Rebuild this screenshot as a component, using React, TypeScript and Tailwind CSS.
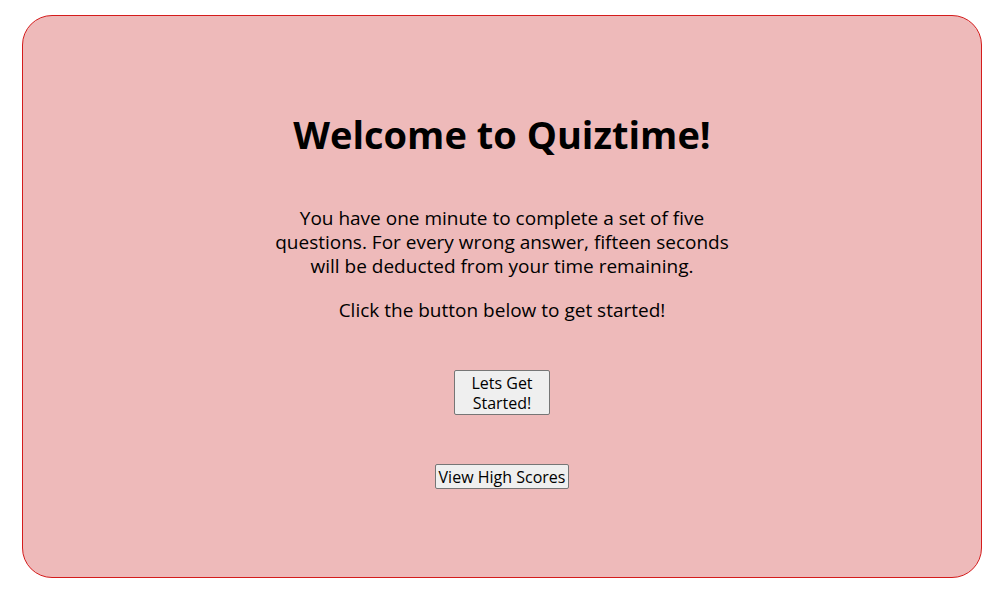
export default function App() {
	return (
		<div className="w-[995px] h-[591px] bg-white pt-[15px] pl-[22px]">
			<div
				className="w-[960px] h-[563px] rounded-[30px] border border-[#d41c1c] bg-[#eebaba] flex flex-col items-center text-black"
				style={{ fontFamily: '"Open Sans", "Lato", sans-serif' }}
			>
				<h1 className="mt-[94px] text-[38px] leading-[48px] font-bold">Welcome to Quiztime!</h1>
				<p className="mt-[48px] text-center text-[19px] leading-[24px]">
					You have one minute to complete a set of five
					<br />
					questions. For every wrong answer, fifteen seconds
					<br />
					will be deducted from your time remaining.
				</p>
				<p className="mt-[20px] text-center text-[19px] leading-[24px]">
					Click the button below to get started!
				</p>
				<button className="mt-[48px] w-[96px] h-[45px] px-2 text-[16px] leading-[20px] bg-[#efefef] border border-[#767676] rounded-[2px]">
					Lets Get Started!
				</button>
				<button className="mt-[49px] h-[25px] px-[3px] text-[16px] leading-[20px] bg-[#efefef] border border-[#767676] rounded-[2px]">
					View High Scores
				</button>
			</div>
		</div>
	);
}
